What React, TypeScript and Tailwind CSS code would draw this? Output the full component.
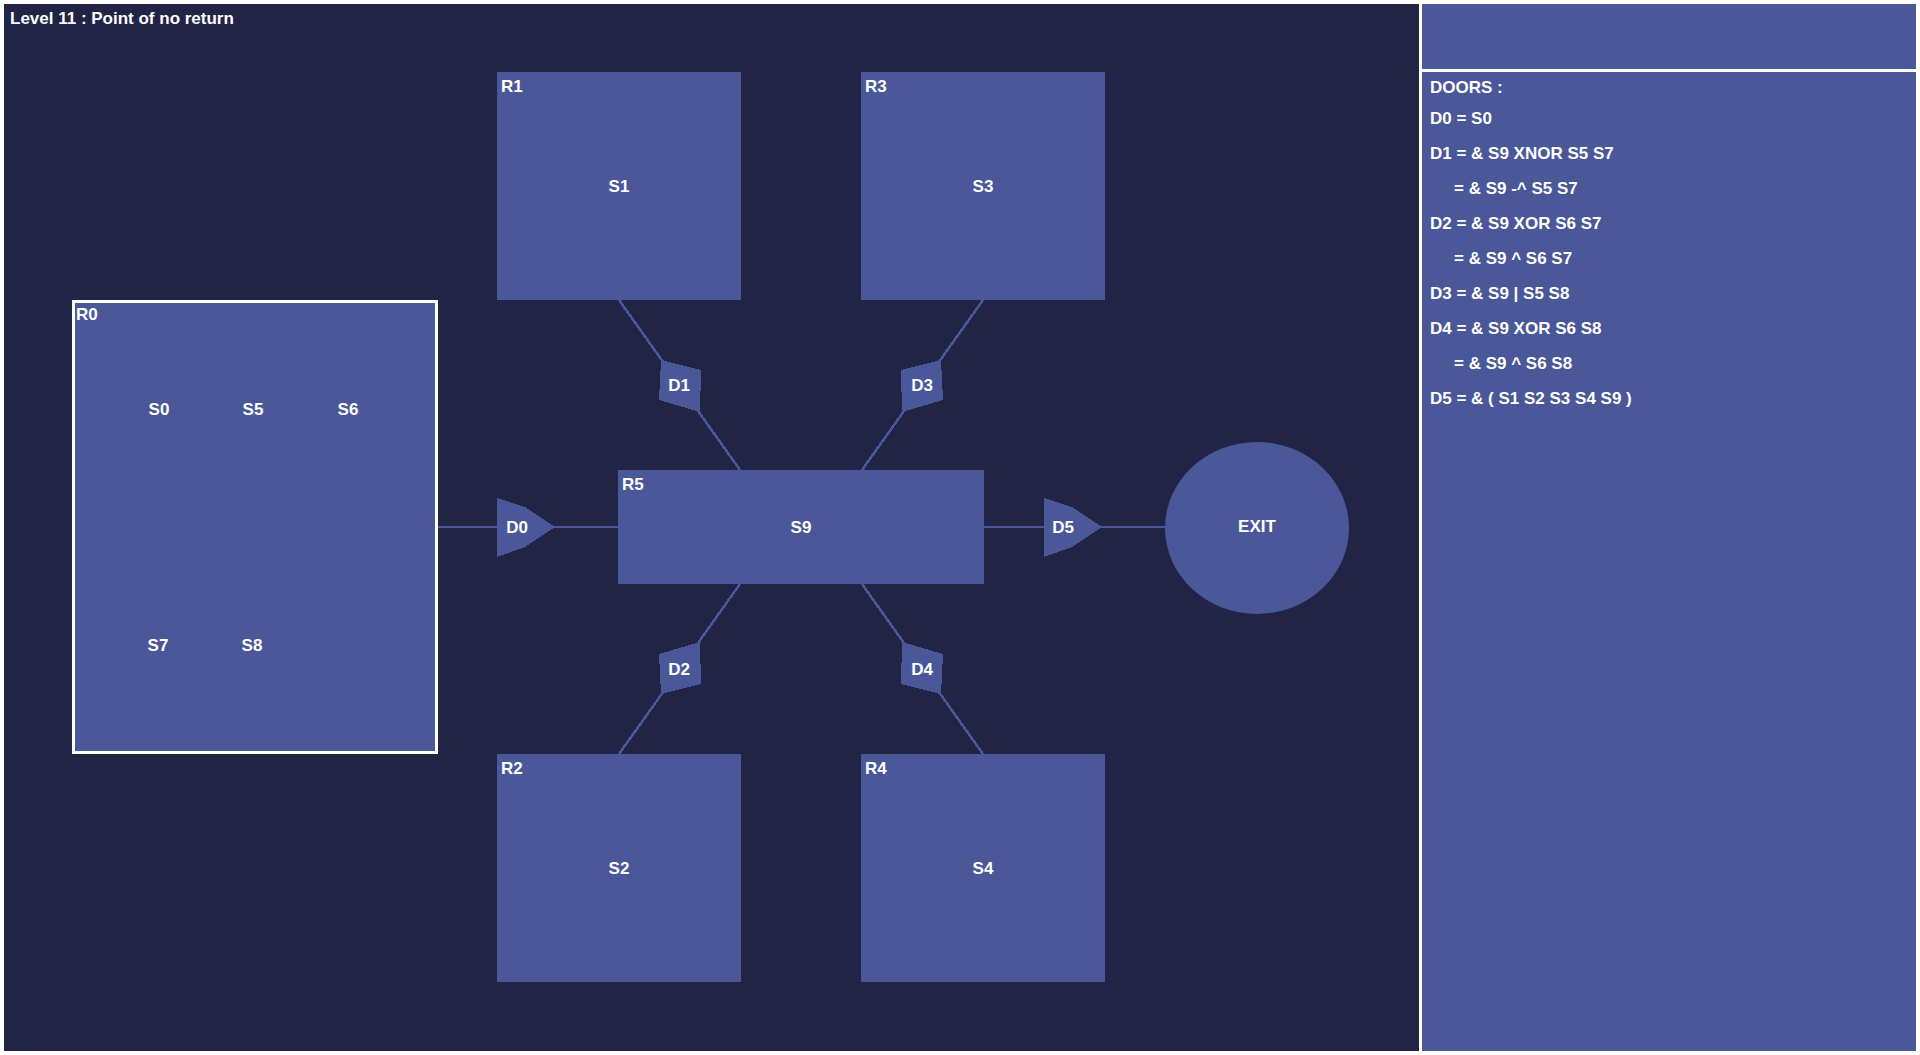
import React from "react";

const font = { fontFamily: '"Liberation Sans", Arial, sans-serif' };

function Room({ cls, label, content }: { cls: string; label: string; content?: string }) {
  return (
    <div className={`absolute bg-[#4a5799] ${cls}`}>
      <div className="absolute left-[4px] top-[6px] leading-none">{label}</div>
      {content && (
        <div className="absolute inset-0 flex items-center justify-center leading-none">{content}</div>
      )}
    </div>
  );
}

function Label({ cls, text }: { cls: string; text: string }) {
  return (
    <div className={`absolute -translate-x-1/2 -translate-y-1/2 leading-none whitespace-nowrap ${cls}`}>{text}</div>
  );
}

export default function App() {
  const lines = [
    "D0 = S0",
    "D1 = & S9 XNOR S5 S7",
    "= & S9 -^ S5 S7",
    "D2 = & S9 XOR S6 S7",
    "= & S9 ^ S6 S7",
    "D3 = & S9 | S5 S8",
    "D4 = & S9 XOR S6 S8",
    "= & S9 ^ S6 S8",
    "D5 = & ( S1 S2 S3 S4 S9 )",
  ];
  return (
    <div
      className="w-[1920px] h-[1055px] bg-white p-[4px] flex gap-[3px] text-white font-bold text-[17px] overflow-hidden"
      style={font}
    >
      <div className="relative w-[1415px] h-[1047px] bg-[#212444] shrink-0">
        <div className="absolute left-[6px] top-[6px] leading-none whitespace-nowrap">Level 11 : Point of no return</div>

        <svg className="absolute inset-0" width="1415" height="1047" viewBox="0 0 1415 1047">
          <g stroke="#4a5799" strokeWidth="2.5" fill="none" shapeRendering="crispEdges">
            <line x1="434" y1="523" x2="614" y2="523" />
            <line x1="980" y1="523" x2="1161" y2="523" />
            <line x1="615" y1="296" x2="736" y2="466" />
            <line x1="979" y1="296" x2="858" y2="466" />
            <line x1="736" y1="580" x2="615" y2="750" />
            <line x1="858" y1="580" x2="979" y2="750" />
          </g>
          <g fill="#4a5799" shapeRendering="crispEdges">
            <polygon points="493,494 521,503 551,523 521,543 493,553" />
            <polygon points="1040,494 1068,503 1098,523 1068,543 1040,553" />
            <polygon points="657,356 697,366 696,408 655,396" />
            <polygon points="937,356 897,366 898,408 939,396" />
            <polygon points="657,690 697,680 696,638 655,650" />
            <polygon points="937,690 897,680 898,638 939,650" />
          </g>
        </svg>

        <div className="absolute left-[68px] top-[296px] w-[366px] h-[454px] bg-[#4a5799] border-[3px] border-white">
          <div className="absolute left-[1px] top-[3px] leading-none">R0</div>
          <Label cls="left-[84px] top-[106px]" text="S0" />
          <Label cls="left-[178px] top-[106px]" text="S5" />
          <Label cls="left-[273px] top-[106px]" text="S6" />
          <Label cls="left-[83px] top-[342px]" text="S7" />
          <Label cls="left-[177px] top-[342px]" text="S8" />
        </div>

        <Room cls="left-[493px] top-[68px] w-[244px] h-[228px]" label="R1" content="S1" />
        <Room cls="left-[857px] top-[68px] w-[244px] h-[228px]" label="R3" content="S3" />
        <Room cls="left-[614px] top-[466px] w-[366px] h-[114px]" label="R5" content="S9" />
        <Room cls="left-[493px] top-[750px] w-[244px] h-[228px]" label="R2" content="S2" />
        <Room cls="left-[857px] top-[750px] w-[244px] h-[228px]" label="R4" content="S4" />

        <div className="absolute left-[1161px] top-[438px] w-[184px] h-[172px] rounded-[50%] bg-[#4a5799] flex items-center justify-center leading-none pb-[4px]">
          EXIT
        </div>

        <Label cls="left-[513px] top-[523px]" text="D0" />
        <Label cls="left-[1059px] top-[523px]" text="D5" />
        <Label cls="left-[675px] top-[381px]" text="D1" />
        <Label cls="left-[918px] top-[381px]" text="D3" />
        <Label cls="left-[675px] top-[665px]" text="D2" />
        <Label cls="left-[918px] top-[665px]" text="D4" />
      </div>

      <div className="w-[494px] h-[1047px] flex flex-col gap-[3px] shrink-0">
        <div className="h-[65px] bg-[#4a5799] shrink-0"></div>
        <div className="flex-1 bg-[#4a5799] pt-[3px] pl-[8px]">
          <div className="leading-[26px] whitespace-nowrap">DOORS :</div>
          {lines.map((l, i) => (
            <div
              key={i}
              className={`leading-[35px] whitespace-nowrap ${l.startsWith("=") ? "pl-[24px]" : ""}`}
            >
              {l}
            </div>
          ))}
        </div>
      </div>
    </div>
  );
}
